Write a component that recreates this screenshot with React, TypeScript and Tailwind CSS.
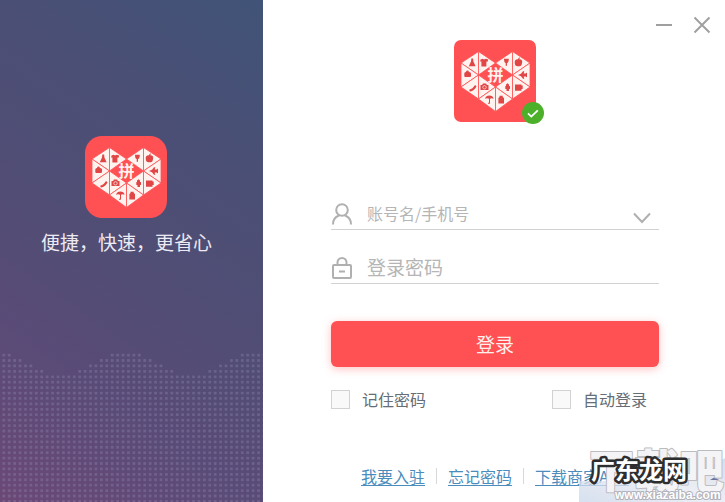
import React from "react";

// first dotted row of every column, repeated along the panel
const wave = [0, 0, 1, 1, 2, 2, 3, 3, 4, 4, 4, 4, 4, 4, 3, 3, 2, 2, 1, 1, 0, 0, 0, 0];
const DOT_STEP = 5.42;

const triangles = [
  "7,23 24.5,11.5 24.5,35",
  "24.5,11.5 24.5,35 41.5,23",
  "7,23 7,47 24.5,35",
  "7,47 24.5,35 24.5,59",
  "24.5,35 24.5,59 41.5,47",
  "24.5,59 41.5,47 41.5,71.5",
  "76,23 58.5,11.5 58.5,35",
  "58.5,11.5 58.5,35 41.5,23",
  "76,23 76,47 58.5,35",
  "76,47 58.5,35 58.5,59",
  "58.5,35 58.5,59 41.5,47",
  "58.5,59 41.5,47 41.5,71.5",
];

const HeartLogo = ({ radius }: { radius: number }) => (
  <svg viewBox="0 0 82 82" className="block size-[82px]" aria-hidden="true">
    <rect width="82" height="82" rx={radius} fill="#ff5153" />
    <g fill="#fff3f0" stroke="#ff5153" strokeWidth="0.8">
      {triangles.map((points) => (
        <polygon key={points} points={points} />
      ))}
    </g>
    <g fill="#e04646">
      {/* dress */}
      <path d="M17.3 18.5h1.8l.3 3 2.2 4.7h-6.8l2.2-4.7z" />
      {/* shirt */}
      <path d="M26.5 19.5l2.2-.8q1.5 1.3 3 0l2.5.8-.6 2.3-1.2-.2v5h-5v-5l-1.2.2z" />
      {/* handbag */}
      <path d="M10.3 33.5q0-1.6 1.6-1.6q1.4-2.6 3.2 0q1.9 0 1.9 1.6v2.6q0 1-1 1h-4.7q-1 0-1-1z" />
      {/* heel */}
      <path d="M15.5 49.5q3-.5 5.5-4.5l1.5 1.2q-1.5 4-6 5.3q-1.7.2-1-2z" />
      {/* camera */}
      <path d="M26.5 45h1.6l.8-1.4h3.2l.8 1.4h1.6v5h-8z" />
      <circle cx="30.5" cy="47.3" r="1.7" fill="none" stroke="#fff3f0" strokeWidth="0.7" />
      {/* umbrella */}
      <path d="M31 58.8q1-3.3 4.4-3.3t4.2 3.3q-1.8-1-3.6 0v4.2q-.5 1.6-2 .6v-.8h1v-4q-2-1-4 0z" />
      {/* cup */}
      <path d="M50 18.7h4.8q0 3.8-1.8 4.4v2.6h-1.3v-2.6q-1.7-.6-1.7-4.4z" />
      {/* apple */}
      <path d="M64 19.2q.2-1.5 2-2-.1 1.5-1 2 3.2-.5 3.2 2.7-.3 4.2-2.7 4.4h-2.1q-2.7-.2-2.7-4.1 0-3.2 3.3-3z" />
      {/* plane */}
      <path d="M64 35l3-1.3 2-2.5h1.3l-.6 2.3h2l1.3-.9v4.8l-1.3-.9h-2l.6 2.3H69l-2-2.5z" />
      {/* lipstick */}
      <path d="M52 44.5l1.6-1.2 1.4 1.2v1.6h1v3h-1v2h-2.5v-2h-1.2v-3h.7z" />
      {/* mug */}
      <path d="M61 44.5h6.5v1h1.2v3.4h-1.2v1.8H61z" />
      {/* jar */}
      <path d="M45.5 55.7h3.2V57l1.3 1v5.4h-5.6V58l1.1-1z" />
    </g>
    <text
      x="41.5"
      y="41"
      textAnchor="middle"
      fontSize="16"
      fontWeight="700"
      fill="#fff3f0"
      fontFamily="Noto Sans CJK SC, sans-serif"
    >
      拼
    </text>
  </svg>
);

const DottedWave = () => {
  const dots: React.ReactNode[] = [];
  for (let col = 0; col < 49; col++) {
    for (let row = wave[col % 24]; row < 28; row++) {
      dots.push(
        <rect
          key={`${col}-${row}`}
          x={2.4 + col * DOT_STEP}
          y={0.7 + row * DOT_STEP}
          width="2.8"
          height="2.8"
          rx="0.6"
        />
      );
    }
  }
  return (
    <svg
      viewBox="0 0 263 149"
      className="block w-full"
      fill="#a6a4cc"
      fillOpacity="0.25"
      aria-hidden="true"
    >
      {dots}
    </svg>
  );
};

const App = () => {
  const [account, setAccount] = React.useState("");
  const [password, setPassword] = React.useState("");

  return (
    <div className="relative flex min-h-screen overflow-hidden bg-white font-['Noto_Sans_CJK_SC',sans-serif]">
      <aside className="flex w-[263px] shrink-0 flex-col items-center justify-between bg-[linear-gradient(215deg,#415378_0%,#4b4f75_28%,#524d75_55%,#5a4b77_75%,#6b4876_100%)]">
        <div className="flex flex-col items-center pt-34 pr-2.5">
          <HeartLogo radius={17} />
          <p className="mt-2.5 text-[19px] leading-7 whitespace-nowrap text-[#eceaf2]">
            便捷，快速，更省心
          </p>
        </div>
        <DottedWave />
      </aside>

      <main className="flex flex-1 flex-col">
        <div className="flex h-10 items-end justify-end gap-3 pr-2.5 pb-0.5">
          <button type="button" aria-label="最小化" className="p-1">
            <svg viewBox="0 0 18 18" className="size-[18px]" stroke="#a0a0a0" strokeWidth="2">
              <path d="M1 9h16" />
            </svg>
          </button>
          <button type="button" aria-label="关闭" className="p-1">
            <svg viewBox="0 0 18 18" className="size-[18px]" stroke="#a0a0a0" strokeWidth="2">
              <path d="M1.5 1.5l15 15M16.5 1.5l-15 15" />
            </svg>
          </button>
        </div>

        <form
          onSubmit={(e) => e.preventDefault()}
          className="flex flex-1 flex-col pr-[66px] pl-[68px]"
        >
          <div className="relative self-center">
            <HeartLogo radius={7} />
            <svg
              viewBox="0 0 22 22"
              className="absolute -right-2 -bottom-0.5 size-[22px]"
              aria-hidden="true"
            >
              <circle cx="11" cy="11" r="11" fill="#4cb02a" />
              <path d="M6 11.3l3.3 3.3 6.5-6.2" fill="none" stroke="#fff" strokeWidth="1.8" />
            </svg>
          </div>

          <div className="mt-19 flex h-8 items-center border-b border-[#d2d2d2]">
            <label htmlFor="account" aria-label="账号名" className="shrink-0">
              <svg
                viewBox="0 0 22 24"
                className="h-6 w-[22px]"
                fill="none"
                stroke="#b0b0b0"
                strokeWidth="2"
              >
                <circle cx="11" cy="8" r="5.8" />
                <path d="M2 22.5q0-7 6-9M20 22.5q0-7-6-9" />
              </svg>
            </label>
            <input
              id="account"
              type="text"
              value={account}
              onChange={(e) => setAccount(e.target.value)}
              placeholder="账号名/手机号"
              className="ml-3.5 h-8 min-w-0 flex-1 pb-0.5 text-[16px] text-[#555] outline-none placeholder:text-[#b5b5b5]"
            />
            <button type="button" aria-label="选择账号" className="mr-2 shrink-0">
              <svg
                viewBox="0 0 18 12"
                className="mt-2 h-3 w-[18px]"
                fill="none"
                stroke="#b0b0b0"
                strokeWidth="2"
              >
                <path d="M1 1.5l8 8.5 8-8.5" />
              </svg>
            </button>
          </div>

          <div className="mt-[22px] flex h-8 items-center border-b border-[#d2d2d2]">
            <label htmlFor="password" aria-label="密码" className="shrink-0">
              <svg
                viewBox="0 0 22 24"
                className="h-6 w-[22px]"
                fill="none"
                stroke="#b0b0b0"
                strokeWidth="2"
              >
                <rect x="2" y="9" width="18" height="13" rx="1" />
                <path d="M6.5 9V6.5a4.5 4.5 0 0 1 9 0V9M8 15.5h6" />
              </svg>
            </label>
            <input
              id="password"
              type="password"
              value={password}
              onChange={(e) => setPassword(e.target.value)}
              placeholder="登录密码"
              className="ml-3.5 h-8 min-w-0 flex-1 pb-0.5 text-[19px] text-[#555] outline-none placeholder:text-[#b5b5b5]"
            />
          </div>

          <button
            type="submit"
            className="mt-[37px] h-[46px] w-full rounded-md bg-[#ff5153] text-[19px] text-[#fff0ee] shadow-[0_2px_8px_rgba(255,81,83,0.35)]"
          >
            登录
          </button>

          <div className="mt-4.5 flex h-7 items-center justify-between pr-3 text-[16px] text-[#666d75]">
            <label className="flex items-center gap-3">
              <input
                type="checkbox"
                className="size-[19px] appearance-none border border-[#d2d2d2] bg-[#f9f9f9] checked:bg-[#ff5153]"
              />
              记住密码
            </label>
            <label className="flex items-center gap-3">
              <input
                type="checkbox"
                className="size-[19px] appearance-none border border-[#d2d2d2] bg-[#f9f9f9] checked:bg-[#ff5153]"
              />
              自动登录
            </label>
          </div>

          <nav className="mt-auto mb-3 ml-[30px] flex h-7 items-center gap-[11px] text-[16px] whitespace-nowrap text-[#4b8cbd] underline underline-offset-2">
            <a href="#join">我要入驻</a>
            <span className="h-4 w-px bg-[#d8d8d8]" />
            <a href="#forgot">忘记密码</a>
            <span className="h-4 w-px bg-[#d8d8d8]" />
            <a href="#app">下载商家APP</a>
          </nav>
        </form>
      </main>

      {/* site stamps over the corner */}
      <svg
        viewBox="0 0 146 64"
        className="pointer-events-none absolute right-0 bottom-0 h-16 w-[146px]"
        fontFamily="Noto Sans CJK SC, sans-serif"
        strokeLinejoin="round"
      >
        <defs>
          <linearGradient id="mist" x1="0" x2="1" y1="1" y2="0">
            <stop offset="0" stopColor="#c9d6ea" />
            <stop offset="0.5" stopColor="#e6e9f1" />
            <stop offset="1" stopColor="#cdd3e3" />
          </linearGradient>
        </defs>
        <path d="M0 43h105L146 20v44H0z" fill="url(#mist)" fillOpacity="0.75" />
        <path d="M131 42l5-3 4 3z" fill="#6a719c" />
        <g fontWeight="700" paintOrder="stroke">
          <text
            x="10"
            y="50"
            fontSize="45"
            fontWeight="900"
            fill="#f4f4f7"
            stroke="#bcbcc0"
            strokeWidth="2"
          >
            下载吧
          </text>
          <text
            x="36"
            y="61"
            fontSize="12"
            fontFamily="Liberation Sans, sans-serif"
            fill="#fff"
            stroke="#b0b2bc"
            strokeWidth="2"
          >
            www.xiazaiba.com
          </text>
          <text x="12" y="41" fontSize="24" fill="#fff" stroke="#2e2e2e" strokeWidth="5">
            广东龙网
          </text>
        </g>
      </svg>
    </div>
  );
};

export default App;
